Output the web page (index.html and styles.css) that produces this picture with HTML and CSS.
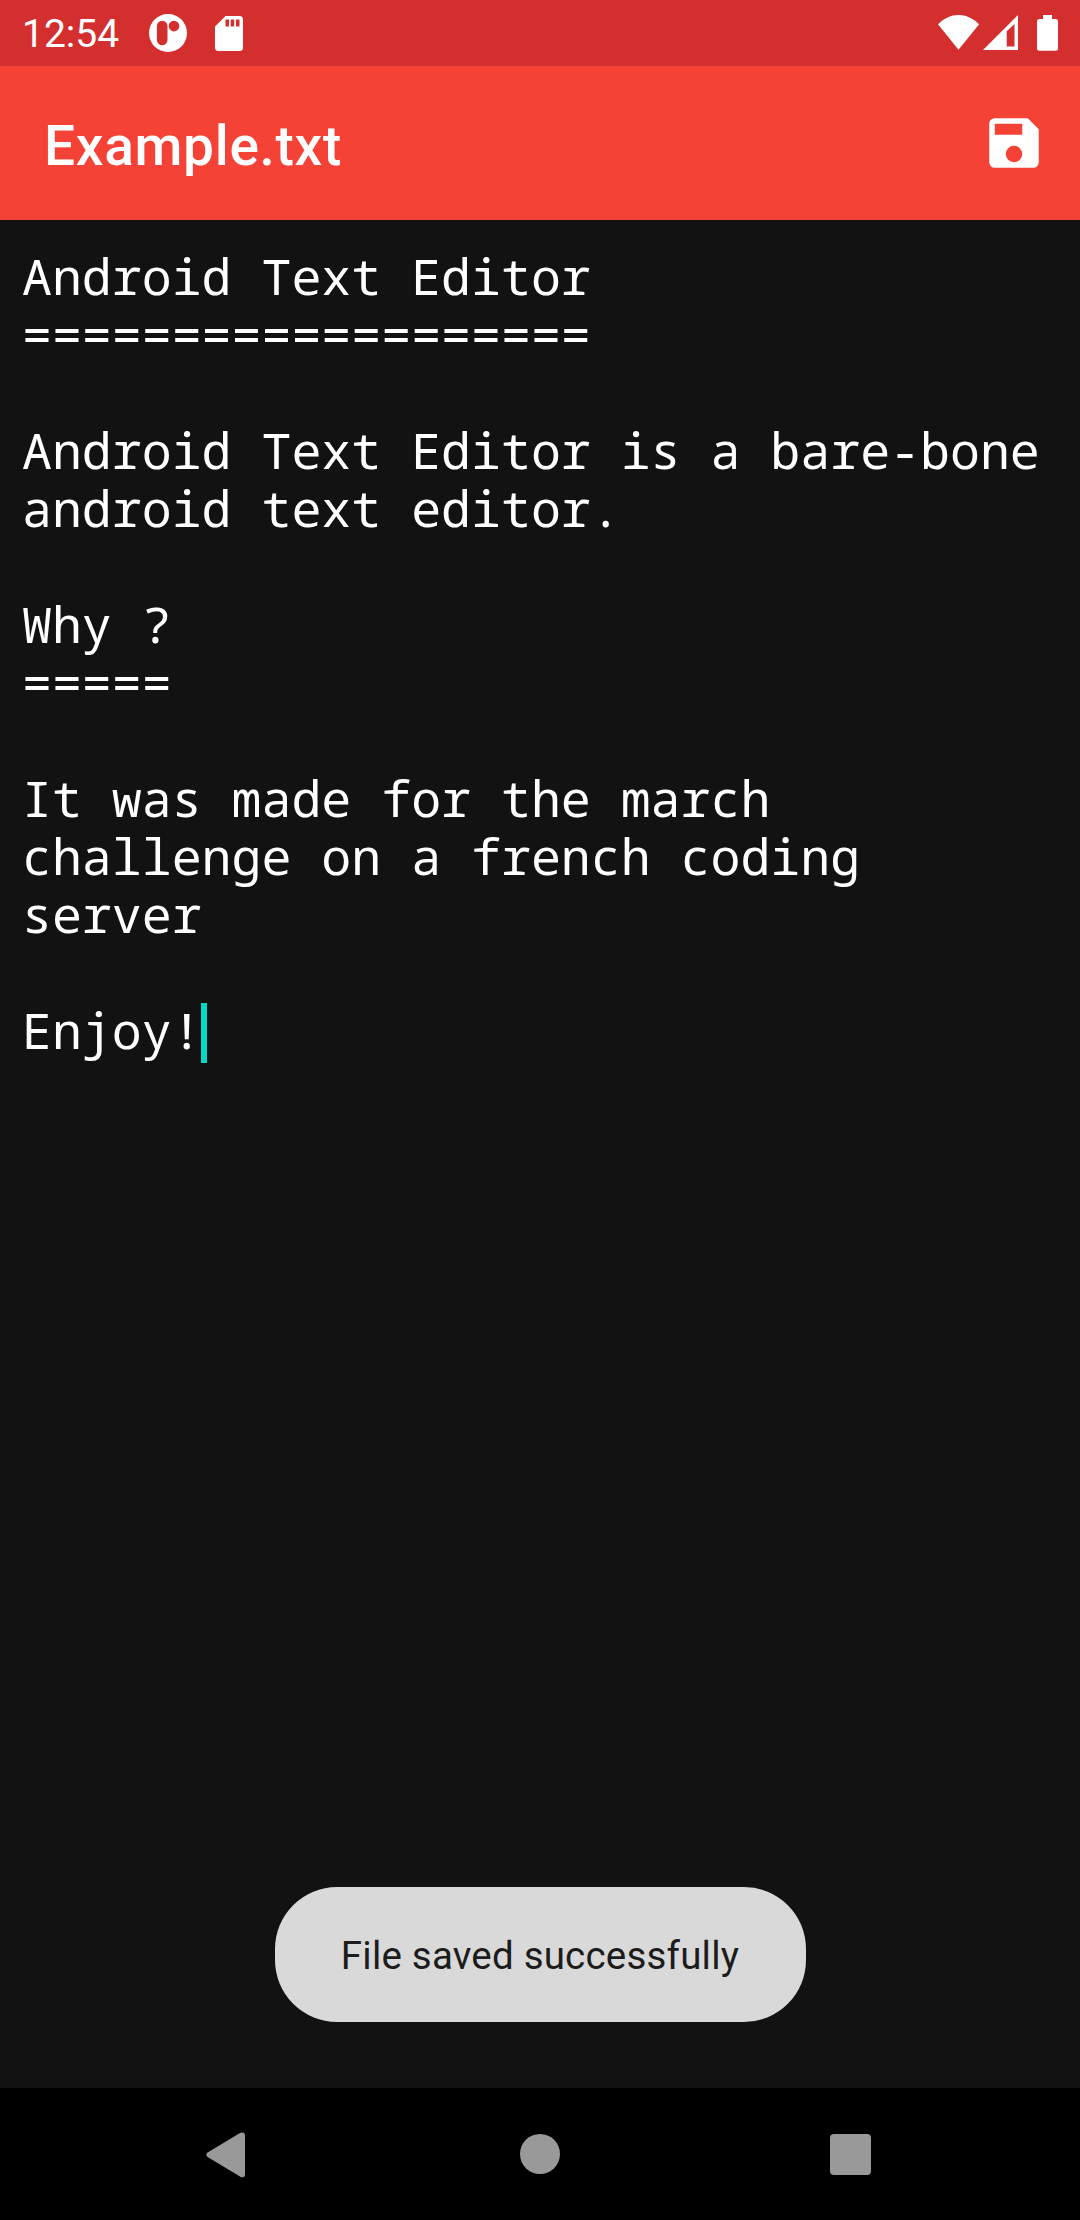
FILE: index.html
```html
<!DOCTYPE html>
<html lang="en">
<head>
<meta charset="utf-8">
<title>Example.txt</title>
<link rel="stylesheet" href="styles.css">
</head>
<body>
<div class="screen">
  <div class="status-bar">
    <span class="clock">12:54</span>
    <svg class="notify-icon" width="38" height="38" viewBox="0 0 38 38"><path fill="#fff" fill-rule="evenodd" d="M19 0a19 19 0 1 1 0 38a19 19 0 1 1 0-38zM13.2 6.800a5.300 5.300 0 0 0-5.300 5.300v13.800a5.300 5.300 0 0 0 10.600 0v-13.800a5.300 5.300 0 0 0-5.300-5.300zM25 6.800a5.300 5.300 0 1 0 0 10.600a5.300 5.300 0 1 0 0-10.600z"/></svg>
    <svg class="sd-icon" width="28" height="35" viewBox="0 0 28 35"><path fill="#fff" fill-rule="evenodd" d="M10.500 0H24.500a3.500 3.500 0 0 1 3.500 3.500v28a3.500 3.500 0 0 1-3.500 3.500h-21a3.500 3.500 0 0 1-3.500-3.500V10.500zM10.500 3.500v7h3.500v-7zM15.700 3.500v7h3.500v-7zM21 3.500v7h3.500v-7z"/></svg>
    <div class="system-icons">
      <svg width="42" height="36" viewBox="0 0 42 36"><path fill="#fff" d="M20.500 34.800L0 9.300C6 3.300 13 0 20.500 0S35 3.300 41.100 9.300z"/></svg>
      <svg class="signal-icon" width="36" height="36" viewBox="0 0 36 36"><path fill="#fff" fill-rule="evenodd" d="M0 35L35 0V35zM23.700 16.200V31.500H31.500V9z"/></svg>
      <svg class="battery-icon" width="21" height="36" viewBox="0 0 21 36"><path fill="#fff" d="M6 0h9v4h3.500a2.500 2.500 0 0 1 2.500 2.500v26.700a2.500 2.500 0 0 1-2.500 2.500h-16a2.500 2.500 0 0 1-2.500-2.500V6.500a2.500 2.500 0 0 1 2.500-2.500H6z"/></svg>
    </div>
  </div>
  <header class="app-bar">
    <h1 class="title">Example.txt</h1>
    <button class="save" aria-label="Save"><svg width="66" height="66" viewBox="0 0 24 24"><path fill="#fff" fill-rule="evenodd" d="M17 3H5a2 2 0 0 0-2 2v14a2 2 0 0 0 2 2h14a2 2 0 0 0 2-2V7zM12 19a3 3 0 1 1 0-6a3 3 0 0 1 0 6zM15 9H5V5h10z"/></svg></button>
  </header>
  <main class="editor">
<pre class="text">Android Text Editor
===================

Android Text Editor is a bare-bone
android text editor.

Why ?
=====

It was made for the march
challenge on a french coding
server

Enjoy!<span class="caret"></span></pre>
    <div class="toast">File saved successfully</div>
  </main>
  <nav class="nav-bar">
    <svg class="back" width="40" height="46" viewBox="0 0 40 46"><path fill="#999" d="M1.600 20.500L34 1Q39 -1 39 4V42Q39 47 34 44.400L1.600 25Q-1 22.800 1.600 20.500z"/></svg>
    <svg class="home" width="40" height="40" viewBox="0 0 40 40"><circle cx="20" cy="20" r="20" fill="#999"/></svg>
    <svg class="recents" width="41" height="41" viewBox="0 0 41 41"><rect width="41" height="41" rx="4" fill="#999"/></svg>
  </nav>
</div>
</body>
</html>
```
FILE: styles.css
```css
* { box-sizing: border-box; }
body { margin: 0; background: #121212; }
svg { display: block; flex: none; }
.screen {
  display: flex;
  flex-direction: column;
  width: 1080px;
  height: 2220px;
  font-family: Roboto, sans-serif;
  color: #fff;
}
.status-bar {
  display: flex;
  align-items: flex-start;
  height: 66px;
  padding: 0 22px;
  background: #d32f2f;
}
.clock {
  width: 127px;
  font-size: 39px;
  line-height: 46px;
  margin-top: 11px;
}
.notify-icon { margin-top: 14px; }
.sd-icon { margin: 16px 0 0 28px; }
.system-icons { display: flex; margin: 15px 0 0 auto; }
.signal-icon { margin-left: 3px; }
.battery-icon { margin-left: 18px; }
.app-bar {
  display: flex;
  justify-content: space-between;
  height: 154px;
  padding: 44px 33px 0 44px;
  background: #f44336;
}
.title {
  margin: 4px 0 0;
  font-size: 55px;
  line-height: 64px;
  font-weight: 500;
  letter-spacing: 0.7px;
}
.save { width: 66px; height: 66px; padding: 0; border: 0; background: none; }
.editor {
  flex: 1;
  display: flex;
  flex-direction: column;
  align-items: center;
  justify-content: space-between;
  padding: 27px 22px 66px;
  background: #121212;
}
.text {
  align-self: stretch;
  margin: 0;
  font-family: "Noto Sans Mono", "Droid Sans Mono", "DejaVu Sans Mono", monospace;
  font-size: 49.900px;
  line-height: 58px;
}
.caret {
  display: inline-block;
  width: 6px;
  height: 60px;
  margin: -10px 0 -14px -1px;
  vertical-align: 0;
  background: #03dac5;
}
.toast {
  width: 531px;
  height: 135px;
  padding-top: 1px;
  border-radius: 62px;
  background: #d9d9d9;
  color: #1c1c1c;
  font-size: 38.500px;
  line-height: 135px;
  letter-spacing: 0.2px;
  text-align: center;
}
.nav-bar {
  display: flex;
  align-items: flex-start;
  height: 132px;
  padding: 44px 0 0 206px;
  background: #000;
}
.home { margin: 2px 0 0 274px; }
.recents { margin: 2px 0 0 270px; }
```
